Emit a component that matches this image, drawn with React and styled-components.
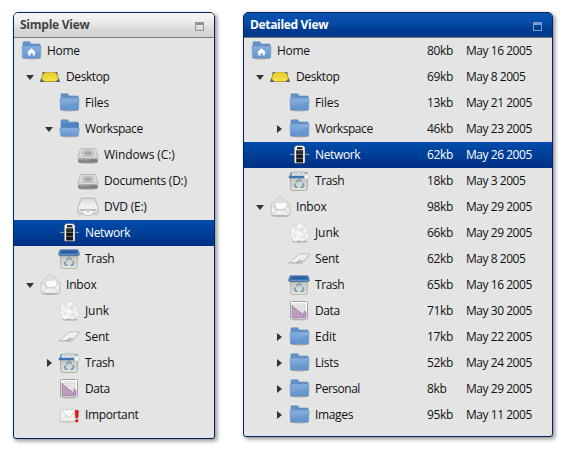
import React from "react";
import styled, { createGlobalStyle, css } from "styled-components";

const GlobalStyle = createGlobalStyle`
  body {
    margin: 0;
    background: #fff;
    font-family: "Open Sans", "Noto Sans", sans-serif;
    font-size: 12px;
    color: #111;
  }
`;

const Stage = styled.main`
  display: flex;
  align-items: flex-start;
  gap: 28px;
  padding: 12px 0 0 13px;
  height: 451px;
  box-sizing: border-box;
`;

const Panel = styled.section`
  box-sizing: border-box;
  flex: none;
  width: ${(p) => p.$width}px;
  height: ${(p) => p.$height}px;
  border: 1px solid #00265c;
  border-radius: 5px 5px 3px 3px;
  background: #e4e4e4;
  box-shadow: 2px 2px 4px rgba(0, 0, 0, 0.45);
  overflow: hidden;
`;

const Header = styled.header`
  box-sizing: border-box;
  display: flex;
  align-items: center;
  justify-content: space-between;
  height: 25px;
  padding: 0 10px 0 6px;
  border-bottom: 1px solid #777;
  color: ${(p) => (p.$active ? "#fff" : "#444")};
  background: ${(p) =>
    p.$active
      ? "linear-gradient(#0a52ae, #064ba7 45%, #003c93 65%, #003888)"
      : "linear-gradient(#f6f6f6, #e9e9e9 45%, #dadada 65%, #d2d2d2)"};
`;

const Title = styled.h2`
  margin: 0;
  font-size: 12px;
  font-weight: 700;
  line-height: 24px;
  letter-spacing: ${(p) => p.$tracking}px;
`;

const WindowButton = styled.span`
  box-sizing: border-box;
  width: 9px;
  height: 9px;
  margin-top: 3px;
  border: 1px solid ${(p) => (p.$active ? "#7c9dcc" : "#929292")};
  border-top-width: 3px;
`;

const Row = styled.div`
  display: flex;
  align-items: center;
  height: 26px;
  padding-left: ${(p) => 6 + Math.max(0, p.$depth - 1) * 19}px;
  ${(p) =>
    p.$selected &&
    css`
      color: #fff;
      background: linear-gradient(#004dac, #003083);
    `}
`;

const ArrowSlot = styled.span`
  display: flex;
  justify-content: center;
  flex: none;
  width: 19px;
`;

const Arrow = styled.span`
  border: 4px solid transparent;
  ${(p) =>
    p.$open
      ? css`
          border-top: 5px solid #333;
          border-bottom: 0;
          margin-left: 1px;
        `
      : css`
          border-left: 5px solid #333;
          border-right: 0;
          margin-left: 2px;
        `}
`;

const Icon = styled.svg`
  flex: none;
  width: 22px;
  height: 22px;
`;

const Label = styled.span`
  flex: 1;
  margin-left: 5px;
  white-space: nowrap;
  line-height: 26px;
  letter-spacing: ${(p) => p.$tracking}px;
`;

const Cell = styled.span`
  flex: none;
  width: ${(p) => p.$width}px;
  white-space: nowrap;
  line-height: 26px;
  letter-spacing: ${(p) => p.$tracking}px;
`;

const folderBack = (
  <>
    <ellipse cx="11.5" cy="18.3" rx="8.8" ry="1.1" fill="#8a8a8a" opacity=".7" />
    <path d="M3 10V2.6q0-.8.8-.8h5.7q.8 0 .9.8l.2 1.4h8.8q.8 0 .8.8V10z" fill="#6391c5" stroke="#5a88bd" strokeWidth=".6" />
  </>
);

const folderFace = (
  <path
    d="M2 6.8q0-.8.8-.8h17.4q.8 0 .8.8l-.4 10.4q-.1.9-1 .9H3.4q-.9 0-1-.9z"
    fill="url(#folderFront)"
    stroke="#648fc2"
    strokeWidth=".5"
  />
);

const art = {
  folder: (
    <>
      {folderBack}
      {folderFace}
      <path d="M2.4 13.5Q12 13 20.6 9.5l-.3 7.8H2.8z" fill="#5b8fca" opacity=".35" />
    </>
  ),
  home: (
    <>
      {folderBack}
      {folderFace}
      <path d="M11.5 8.2 16 12.4h-1.2v3.2h-2.1v-2.4h-2.2v2.4H8.3v-3.2H7z" fill="#fff" />
    </>
  ),
  folderOpen: (
    <>
      {folderBack}
      <path d="M3 5h17.8v7H3z" fill="#4f84c0" />
      <path d="M1.6 10.8q0-.7.8-.7h18.2q.8 0 .8.7l-.9 6.5q-.1.8-1 .8h-16q-.9 0-1-.8z" fill="url(#folderFront)" stroke="#7ea8d8" strokeWidth=".6" />
    </>
  ),
  desktop: (
    <>
      <path d="M4 6.2h14l3 9.8H1z" fill="#b99b1d" />
      <path d="M5 6.8h12l2.8 8.2H2.2z" fill="url(#yellow)" />
      <path d="M3.7 6h3L3.3 8.6zM18.3 6h-3l3.4 2.6zM2.2 12.2 1 16h4.6zM19.8 12.2 21 16h-4.6z" fill="#566378" />
    </>
  ),
  drive: (
    <>
      <ellipse cx="11" cy="18.6" rx="9.5" ry="1" fill="#999" />
      <path d="M4.5 4.5h13q.8 0 1.2 1l2.3 7H1l2.3-7q.4-1 1.2-1z" fill="#dcdcdc" stroke="#9a9a9a" strokeWidth=".6" />
      <ellipse cx="11" cy="9" rx="6" ry="3.2" fill="#c2c2c2" stroke="#aaa" strokeWidth=".4" />
      <ellipse cx="11" cy="9" rx="3" ry="1.5" fill="#999" />
      <ellipse cx="11" cy="9" rx="1.2" ry=".6" fill="#ddd" />
      <path d="M1 13h20v4.2q0 1-1 1H2q-1 0-1-1z" fill="url(#driveFront)" />
      <path d="M1.6 13.2h18.8" stroke="#f4f4f4" strokeWidth=".8" />
      <path d="M13.5 16h5.7" stroke="#4c4c4c" strokeWidth="1.2" strokeDasharray="1 .7" />
    </>
  ),
  dvd: (
    <>
      <path d="M5 2.2h12q.8 0 1.1.9L21 11.6v5.2q0 1-1 1H2q-1 0-1-1v-5.2l2.9-8.5q.3-.9 1.1-.9z" fill="#e4e4e4" stroke="#a2a2a2" strokeWidth=".8" />
      <path d="M4.8 3h12.4l2.8 8H2z" fill="url(#paper)" />
      <path d="M1.5 12h19" stroke="#fafafa" />
      <path d="M3.2 14h15.6" stroke="#858585" strokeWidth=".8" />
      <path d="M4.5 14.3h13q-1.2 5.3-6.5 5.3T4.5 14.3z" fill="#f4f4f4" stroke="#aaa" strokeWidth=".6" />
      <ellipse cx="11" cy="15.3" rx="2" ry="1.2" fill="#c8c8c8" stroke="#fff" strokeWidth=".5" />
    </>
  ),
  network: (
    <>
      <path d="M1.8 10.4h19.4" stroke="#8fa39c" strokeWidth="1" />
      <path d="M8 1.5h7l2 2.1v14.7q0 1-1 1H7.3q-1 0-1-1V3.6z" fill="#f5f5f5" stroke="#333" strokeWidth=".4" />
      <path d="M9 3.2h5.4v2H9zM8.2 6.2h6.9v12.2H8.2z" fill="#151515" />
      <path d="M8.2 10.4h6.9M8.2 14.4h6.9" stroke="#a5a5a5" strokeWidth=".7" />
      <path d="M9 7.6h5.2M9 9h5.2" stroke="#666" strokeWidth=".5" />
    </>
  ),
  trash: (
    <>
      <path d="M2.2 6h17.6l-.7 13.2q-.1 1.3-1.4 1.3H4.3q-1.3 0-1.4-1.3z" fill="url(#bin)" stroke="#8a8c82" strokeWidth=".5" />
      <path d="M2.2 7.2h17.6v1.1H2.3z" fill="#555" opacity=".6" />
      <path d="M2.7 1.8h16.6q.7 0 .9.7l1.2 4q.1.8-.7.8H1.3q-.8 0-.7-.8l1.2-4q.2-.7.9-.7z" fill="#477fbd" stroke="#285a94" strokeWidth=".6" />
      <path d="M3.5 2.8h15l.6 2.6H2.9z" fill="#285d9e" />
      <path d="M1.5 6.4h19" stroke="#6a9bd2" strokeWidth=".8" />
      <RecycleMark />
    </>
  ),
  trashFull: (
    <>
      <path d="M2.2 7h17.6l-.7 12.2q-.1 1.3-1.4 1.3H4.3q-1.3 0-1.4-1.3z" fill="url(#bin)" stroke="#777a72" strokeWidth=".5" />
      <path d="M1.4 6.8 2.8 2.3h16.4l1.4 4.5z" fill="#557fa9" />
      <path d="M3.2 6 4 2.8l2.2-1.5 2 1L10.6.8l1.7 1.4 2.7-.7 1.3 1.3 2.2.4.5 2.7z" fill="#dfe5e9" stroke="#8798a9" strokeWidth=".5" />
      <path d="m6 2.5 1.8 2L10.3 2m1 3 2-2.2 2 2" fill="none" stroke="#8798a9" strokeWidth=".6" />
      <path d="M.8 6h20.4v2.2H.8z" fill="#3d73b2" />
      <path d="m16.5 5 2.8-1.2 2.2 2.4-.8 2.6-3 .6-1.6-1.8z" fill="#f1f3f4" stroke="#b8bec2" strokeWidth=".4" />
      <RecycleMark />
    </>
  ),
  inbox: (
    <>
      <ellipse cx="11.5" cy="19.8" rx="9.5" ry=".9" fill="#aaa" />
      <path d="M2.2 8.2 10 1.3q1.2-.9 2.6 0l8.2 6.9v10.2q0 .9-.9.9H3.1q-.9 0-.9-.9z" fill="#f0f0ee" stroke="#b0b0b0" strokeWidth=".7" />
      <path d="m3.3 8.5 7.3-6.3q.8-.5 1.6 0l7.5 6.3-3 5H6.5z" fill="#dededc" />
      <path d="M6 7.3 17.3 6l.8 5-3.4 3H8z" fill="#fbfbfb" stroke="#cfcfcd" strokeWidth=".5" />
      <path d="m2.8 18.8 5.5-5.2h6.5l5.5 5.2M2.6 9l5.7 4.6m6.5 0L20.4 9" fill="none" stroke="#c0c0bc" strokeWidth=".8" />
    </>
  ),
  junk: (
    <>
      <ellipse cx="12" cy="19.6" rx="8" ry="1.1" fill="#b5b5b5" />
      <path d="M4.5 3.2 8 3.8l2.8-2.5 3 1 3 .6.4 3 2.2 2-.7 3 2.5 2-1 3.3-3.2 1.4-2.6 2-3.5-1.5-3.4 1.4-3.6-1.4.4-3L2 12.5l1.4-3L2.3 7z" fill="#f7f7f5" stroke="#cbcbc9" strokeWidth=".6" />
      <path d="m10 7.6 6.5-4.4-.2 7.6L12 9.2zM5 10.7 9 13l-2 4zM12.2 15.5l3.8-4 2.7 2.8-4 2.7zM4.5 4 8 4.5l1.6 3-4.4-.3z" fill="#dededb" opacity=".75" />
      <path d="m8 4 2 3.6M10 7.6l-5 3M12 9.2l4.3 1.6M9 13l5 4" fill="none" stroke="#d2d2cf" strokeWidth=".6" />
    </>
  ),
  sent: (
    <>
      <path d="m1 16.2 8-.8 4 1.4 8-8.8z" fill="#aaa" opacity=".5" />
      <path d="M.8 15 12 5.8l9.7.3-6.2 7-4.6-.8-1.2 3.4-2-1.3z" fill="#f2f2f0" stroke="#a0a09d" strokeWidth=".6" />
      <path d="m7.7 14.4 14-8.3-10.8 6.2-1.2 3.4z" fill="#a6a6a3" />
    </>
  ),
  data: (
    <>
      <ellipse cx="11" cy="19.6" rx="8" ry=".8" fill="#bbb" />
      <rect x="2.5" y="1.5" width="17" height="17.5" rx="1" fill="#fff" stroke="#a3a3a3" />
      <rect x="4" y="3" width="14" height="14.5" fill="#ededed" />
      <path d="M4 5.5h14M4 8h14M4 10.5h14M4 13h14M4 15.5h14M6.5 3v14.5M9 3v14.5M11.5 3v14.5M14 3v14.5M16.5 3v14.5" stroke="#d2d2d2" strokeWidth=".5" />
      <path d="M4 5 5.3 7.8 8 8.5l2.5 3 2 .5 2.3 3.6L16.5 11l1.5 1.5v5H4z" fill="#bd9dbd" stroke="#9a6f9b" strokeWidth=".7" />
    </>
  ),
  important: (
    <>
      <ellipse cx="10.5" cy="17.8" rx="9" ry=".8" fill="#bbb" />
      <rect x="2.3" y="5.6" width="17.5" height="11.6" rx=".8" fill="#f2f2f0" stroke="#c4c4c2" strokeWidth=".7" />
      <path d="m3.2 16.5 5.5-5m9.8 5-5.5-5" stroke="#dadad8" strokeWidth=".7" />
      <path d="m3.2 6.5 6.2 6q1.4 1 2.8 0l6.2-6" fill="#fafafa" stroke="#bcbcba" strokeWidth=".8" />
      <path d="M17 6.5h3.5l-.6 7.5h-2.3z" fill="#e01b1b" stroke="#b00" strokeWidth=".4" />
      <circle cx="18.8" cy="16.8" r="1.6" fill="#dc1414" />
    </>
  ),
};

function RecycleMark() {
  return (
    <path
      d="m8.5 12.3 1.6-2.4h2l1.3 2M14.7 13.2l1 2-1.2 2h-2.2M9.7 17.2H7.8l-1.2-2 1-1.7"
      fill="none"
      stroke="#7196bd"
      strokeWidth="1.5"
    />
  );
}

const Gradients = styled.svg`
  position: absolute;
  width: 0;
  height: 0;
`;

function GradientDefs() {
  const stops = {
    folderFront: ["#86aedb", "#6496cf"],
    yellow: ["#e6cc2c", "#f5e04a"],
    driveFront: ["#c4c4c4", "#757575"],
    paper: ["#dcdcdc", "#f5f5f5"],
    bin: ["#c0c2b9", "#e3e4dc"],
  };
  return (
    <Gradients aria-hidden="true">
      <defs>
        {Object.entries(stops).map(([id, [from, to]]) => (
          <linearGradient key={id} id={id} x1="0" y1="0" x2="0" y2="1">
            <stop offset="0" stopColor={from} />
            <stop offset="1" stopColor={to} />
          </linearGradient>
        ))}
      </defs>
    </Gradients>
  );
}

// Letter spacing per label, in pixels.
const tracking = {
  Home: -0.3,
  Desktop: -0.4,
  Files: -0.15,
  Workspace: -0.45,
  "Windows (C:)": -0.1,
  "Documents (D:)": -0.25,
  "DVD (E:)": -0.25,
  Network: -0.35,
  Trash: -0.4,
  Inbox: -0.2,
  Junk: -0.1,
  Sent: -0.2,
  Data: -0.4,
  Important: -0.35,
  Lists: -0.25,
  Personal: -0.5,
  Images: -0.35,
};

const simple = [
  [0, "home", "Home"],
  [1, "desktop", "Desktop", "open"],
  [2, "folder", "Files"],
  [2, "folderOpen", "Workspace", "open"],
  [3, "drive", "Windows (C:)"],
  [3, "drive", "Documents (D:)"],
  [3, "dvd", "DVD (E:)"],
  [2, "network", "Network"],
  [2, "trash", "Trash"],
  [1, "inbox", "Inbox", "open"],
  [2, "junk", "Junk"],
  [2, "sent", "Sent"],
  [2, "trashFull", "Trash", "closed"],
  [2, "data", "Data"],
  [2, "important", "Important"],
];

const detailed = [
  [0, "home", "Home", null, "80kb", "May 16 2005"],
  [1, "desktop", "Desktop", "open", "69kb", "May 8 2005"],
  [2, "folder", "Files", null, "13kb", "May 21 2005"],
  [2, "folder", "Workspace", "closed", "46kb", "May 23 2005"],
  [2, "network", "Network", null, "62kb", "May 26 2005"],
  [2, "trashFull", "Trash", null, "18kb", "May 3 2005"],
  [1, "inbox", "Inbox", "open", "98kb", "May 29 2005"],
  [2, "junk", "Junk", null, "66kb", "May 29 2005"],
  [2, "sent", "Sent", null, "62kb", "May 8 2005"],
  [2, "trash", "Trash", null, "65kb", "May 16 2005"],
  [2, "data", "Data", null, "71kb", "May 30 2005"],
  [2, "folder", "Edit", "closed", "17kb", "May 22 2005"],
  [2, "folder", "Lists", "closed", "52kb", "May 24 2005"],
  [2, "folder", "Personal", "closed", "8kb", "May 29 2005"],
  [2, "folder", "Images", "closed", "95kb", "May 11 2005"],
];

function TreeRow({ item }) {
  const [depth, icon, label, arrow, size, date] = item;
  return (
    <Row $depth={depth} $selected={label === "Network"}>
      {depth > 0 && <ArrowSlot>{arrow && <Arrow $open={arrow === "open"} />}</ArrowSlot>}
      <Icon viewBox="0 0 22 22">{art[icon]}</Icon>
      <Label $tracking={tracking[label] || 0}>{label}</Label>
      {size && <Cell $width={39} $tracking={-0.35}>{size}</Cell>}
      {date && <Cell $width={86} $tracking={-0.46}>{date}</Cell>}
    </Row>
  );
}

function TreePanel({ title, items, width, height, active, titleTracking }) {
  return (
    <Panel $width={width} $height={height}>
      <Header $active={active}>
        <Title $tracking={titleTracking}>{title}</Title>
        <WindowButton $active={active} />
      </Header>
      {items.map((item, i) => (
        <TreeRow key={i} item={item} />
      ))}
    </Panel>
  );
}

export default function App() {
  return (
    <>
      <GlobalStyle />
      <GradientDefs />
      <Stage>
        <TreePanel title="Simple View" items={simple} width={202} height={427} titleTracking={-0.25} />
        <TreePanel title="Detailed View" items={detailed} width={310} height={425} active titleTracking={-0.33} />
      </Stage>
    </>
  );
}
